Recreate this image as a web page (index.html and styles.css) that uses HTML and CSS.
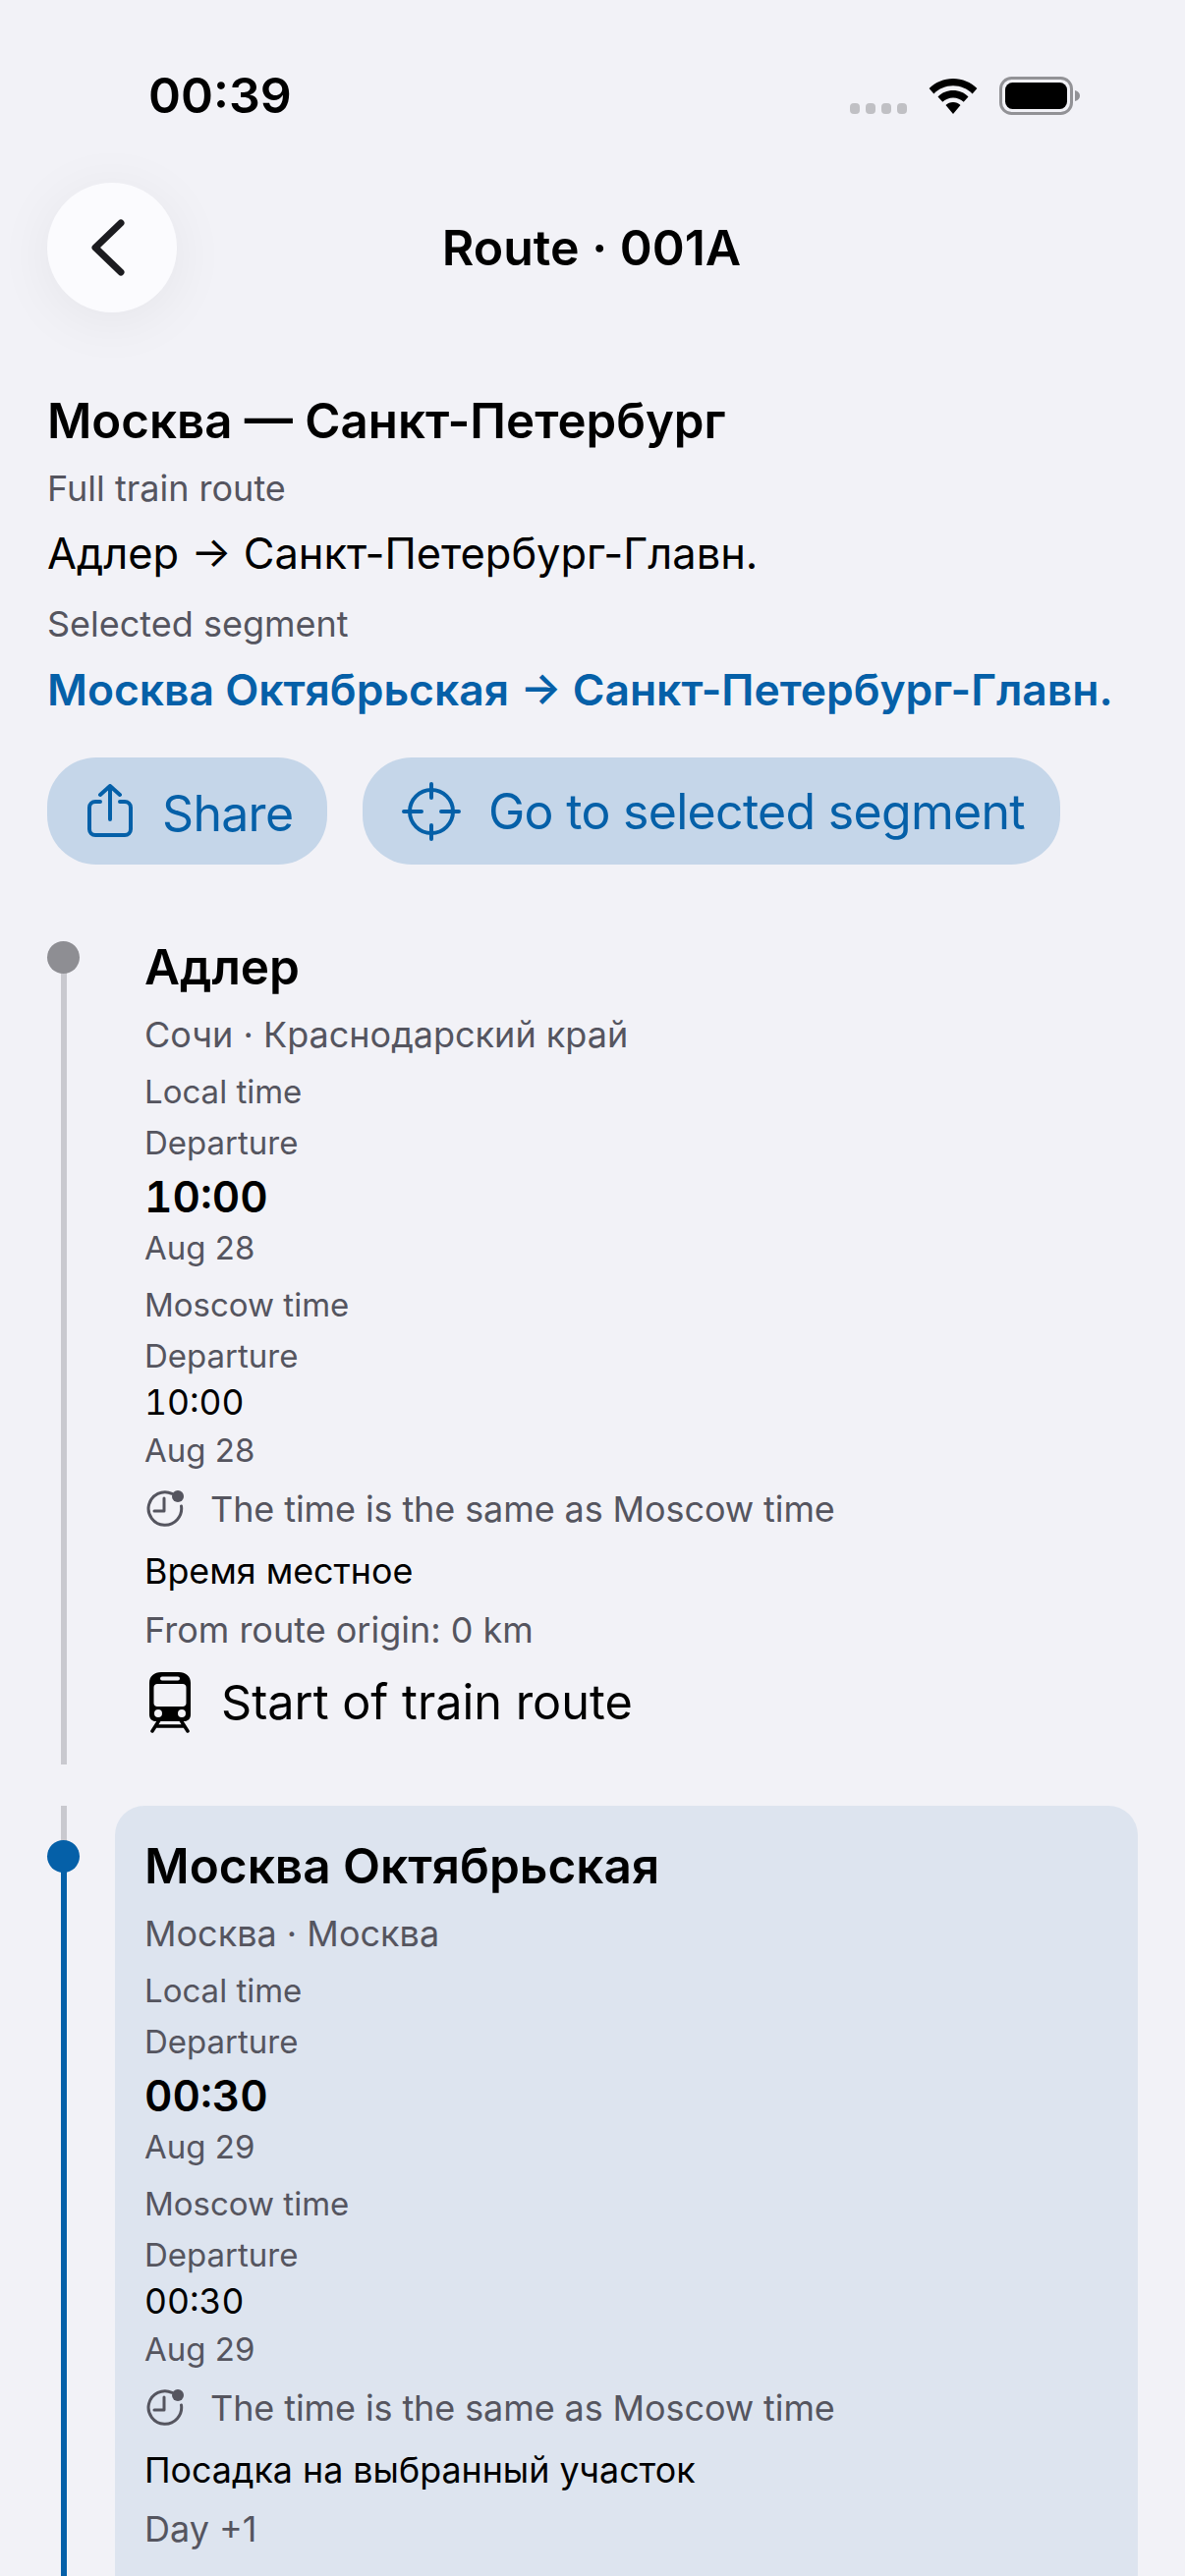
FILE: index.html
```html
<!DOCTYPE html>
<html lang="en">
<head>
<meta charset="utf-8">
<title>Route · 001A</title>
<link rel="stylesheet" href="styles.css">
</head>
<body>
<div class="page">
  <header class="status">
    <span class="clock">00:39</span>
    <div class="status-icons">
      <div class="signal"><i></i><i></i><i></i><i></i></div>
      <svg class="wifi" width="50" height="37" viewBox="0 0 50 37"><path d="M25 0C15.500 0 7 3.800 .6 10l4.800 5.400C10.500 10.400 17.400 7.300 25 7.300s14.500 3.100 19.600 8.100l4.800-5.400C43 3.800 34.500 0 25 0zM25 12c-6 0-11.500 2.400-15.500 6.400l4.800 5.400c2.800-2.700 6.600-4.400 10.700-4.400s7.900 1.700 10.700 4.400l4.800-5.400C36.500 14.400 31 12 25 12zM25 24c-2.900 0-5.500 1.100-7.500 3L25 36l7.500-9c-2-1.900-4.600-3-7.500-3z" fill="#000"/></svg>
      <svg class="battery" width="83" height="39" viewBox="0 0 83 39"><rect x="1.500" y="1.500" width="72" height="36" rx="11" fill="none" stroke="#929296" stroke-width="3"/><rect x="6" y="6" width="63" height="27" rx="7.500" fill="#000"/><path d="M77 14c3 .8 5 2.800 5 5.500s-2 4.700-5 5.500z" fill="#929296"/></svg>
    </div>
  </header>

  <nav class="nav">
    <button class="back" aria-label="Back">
      <svg width="38" height="58" viewBox="0 0 38 58"><path d="M33 4 7 29l26 25" fill="none" stroke="#1c1c20" stroke-width="7" stroke-linecap="round" stroke-linejoin="round"/></svg>
    </button>
    <h1 class="nav-title">Route · 001A</h1>
  </nav>

  <section class="summary">
    <h2 class="route-name">Москва — Санкт-Петербург</h2>
    <p class="meta label-full">Full train route</p>
    <p class="route-full">Адлер → Санкт-Петербург-Главн.</p>
    <p class="meta label-sel">Selected segment</p>
    <p class="route-sel">Москва Октябрьская → Санкт-Петербург-Главн.</p>
    <div class="actions">
      <button class="pill pill-share">
        <svg width="46" height="56" viewBox="0 0 46 56"><path d="M13 18H8a6 6 0 0 0-6 6v22a6 6 0 0 0 6 6h30a6 6 0 0 0 6-6V24a6 6 0 0 0-6-6h-5M23 36V3M13 11l10-9 10 9" fill="none" stroke="#0560a8" stroke-width="4" stroke-linecap="round" stroke-linejoin="round"/></svg>
        <span class="share-text">Share</span>
      </button>
      <button class="pill pill-go">
        <svg width="60" height="60" viewBox="0 0 60 60"><circle cx="30" cy="30" r="22" fill="none" stroke="#0560a8" stroke-width="4"/><path d="M30 2v14M30 44v14M2 30h18M40 30h18" fill="none" stroke="#0560a8" stroke-width="4" stroke-linecap="round"/></svg>
        <span>Go to selected segment</span>
      </button>
    </div>
  </section>

  <section class="timeline">
    <article class="stop stop-first">
      <div class="rail"><span class="line line-gray"></span><span class="dot dot-gray"></span></div>
      <div class="stop-body">
        <h3 class="stop-name">Адлер</h3>
        <p class="stop-region">Сочи · Краснодарский край</p>
        <p class="small s-local">Local time</p>
        <p class="small s-dep">Departure</p>
        <p class="time-big">10:00</p>
        <p class="small s-date">Aug 28</p>
        <p class="small s-msk">Moscow time</p>
        <p class="small s-dep">Departure</p>
        <p class="time-small">10:00</p>
        <p class="small s-date2">Aug 28</p>
        <div class="same">
          <svg width="42" height="38" viewBox="0 0 42 38"><path d="M28 3.300A16.800 16.800 0 1 0 37.500 16M20 8v13H10" fill="none" stroke="#55555f" stroke-width="3" stroke-linecap="round" stroke-linejoin="round"/><circle cx="34" cy="6" r="6" fill="#55555f"/></svg>
          <span>The time is the same as Moscow time</span>
        </div>
        <p class="note">Время местное</p>
        <p class="origin">From route origin: 0 km</p>
        <div class="endpoint">
          <svg width="42" height="62" viewBox="2 0 42 62"><path fill-rule="evenodd" d="M14 0h18c7 0 12 4 12 11v32c0 4-2 6-5 7H7c-3-1-5-3-5-7V11C2 4 7 0 14 0zM15 4.500a1.500 1.500 0 0 0 0 4h16a1.500 1.500 0 0 0 0-4zM10 12c-2 0-3.500 1.500-3.500 3.500v16c0 2 1.500 3.500 3.500 3.500h26c2 0 3.500-1.500 3.500-3.500v-16c0-2-1.500-3.500-3.500-3.500zM11 38a4 4 0 1 0 0 8 4 4 0 0 0 0-8zM35 38a4 4 0 1 0 0 8 4 4 0 0 0 0-8z" fill="#000"/><path d="M12 49 5 60M34 49l7 11M9 55h28" fill="none" stroke="#000" stroke-width="3.500" stroke-linecap="round"/></svg>
          <span>Start of train route</span>
        </div>
      </div>
    </article>

    <article class="stop stop-selected">
      <div class="rail"><span class="line line-gray line-top"></span><span class="line line-blue"></span><span class="dot dot-blue"></span></div>
      <div class="stop-body card">
        <h3 class="stop-name">Москва Октябрьская</h3>
        <p class="stop-region">Москва · Москва</p>
        <p class="small s-local">Local time</p>
        <p class="small s-dep">Departure</p>
        <p class="time-big">00:30</p>
        <p class="small s-date">Aug 29</p>
        <p class="small s-msk">Moscow time</p>
        <p class="small s-dep">Departure</p>
        <p class="time-small">00:30</p>
        <p class="small s-date2">Aug 29</p>
        <div class="same">
          <svg width="42" height="38" viewBox="0 0 42 38"><path d="M28 3.300A16.800 16.800 0 1 0 37.500 16M20 8v13H10" fill="none" stroke="#55555f" stroke-width="3" stroke-linecap="round" stroke-linejoin="round"/><circle cx="34" cy="6" r="6" fill="#55555f"/></svg>
          <span>The time is the same as Moscow time</span>
        </div>
        <p class="note">Посадка на выбранный участок</p>
        <p class="origin">Day +1</p>
        <p class="origin origin-last">From route origin: 1 389 km</p>
      </div>
    </article>
  </section>
</div>
</body>
</html>
```

FILE: styles.css
```css
* { box-sizing: border-box; margin: 0; padding: 0; }
html, body { width: 1206px; height: 2622px; overflow: hidden; background: #f2f2f7; }
body { font-family: Inter, "Noto Sans", sans-serif; color: #000; }
.page { width: 1206px; height: 2622px; overflow: hidden; }

.status { height: 186px; padding: 72px 106px 0 151px; display: flex; justify-content: space-between; align-items: flex-start; }
.clock { font-size: 50px; font-weight: 600; line-height: 50px; }
.status-icons { display: flex; align-items: flex-end; gap: 22px; padding-top: 6px; }
.signal { display: flex; gap: 6px; padding-bottom: 1px; }
.signal i { width: 10px; height: 11px; border-radius: 4px; background: #c0c0c4; }

.nav { height: 132px; position: relative; display: flex; align-items: center; justify-content: center; padding-right: 2px; }
.back { position: absolute; left: 48px; top: 0; width: 132px; height: 132px; border: 0; border-radius: 50%; background: #fbfbfe; display: flex; align-items: center; justify-content: center; padding-right: 10px; box-shadow: 0 8px 60px rgba(0,0,0,.06); }
.nav-title { font-size: 50px; font-weight: 600; line-height: 62px; }

.summary { padding: 80px 48px 0; }
.route-name { font-size: 49.200px; font-weight: 600; line-height: 60px; }
.meta { font-size: 36px; line-height: 42px; color: #55555f; }
.label-full { margin-top: 18px; }
.route-full { font-size: 43.400px; line-height: 54px; margin-top: 18px; }
.label-sel { margin-top: 24px; }
.route-sel { font-size: 44.400px; font-weight: 600; line-height: 54px; margin-top: 19px; color: #0560a8; }
.actions { display: flex; gap: 36px; margin-top: 42px; }
.pill { height: 109px; border: 0; border-radius: 50px; background: #c5d6e9; color: #0560a8; font-family: inherit; font-size: 50px; letter-spacing: -.7px; display: flex; align-items: center; }
.pill-share { width: 285px; padding-left: 41px; gap: 30px; }
.pill-go { width: 710px; padding-left: 40px; gap: 28px; }
.share-text { padding-top: 4px; }

.timeline { padding: 0 48px 0 0; margin-top: 74px; display: flex; flex-direction: column; gap: 42px; }
.stop { display: flex; }
.rail { width: 117px; flex: none; position: relative; }
.line { position: absolute; left: 62px; width: 6px; }
.line-gray { background: #c9c9cf; }
.stop-first .line-gray { top: 20px; bottom: 0; }
.line-top { top: 0; height: 52px; }
.line-blue { top: 52px; bottom: 0; background: #0560a8; }
.dot { position: absolute; left: 48px; width: 33px; height: 33px; border-radius: 50%; }
.dot-gray { top: 4px; background: #8e8e93; }
.dot-blue { top: 35px; background: #0560a8; }

.stop-first { height: 842px; }
.stop-selected { height: 1000px; }
.stop-first .stop-body { padding: 0 30px; }
.stop-body { flex: 1; }
.card { background: #dde4ef; border-radius: 30px; padding: 31px 30px 0; }
.stop-name { font-size: 49.500px; font-weight: 600; line-height: 60px; }
.stop-region { font-size: 36px; line-height: 44px; color: #55555f; margin-top: 17px; }
.small { font-size: 33px; line-height: 40px; color: #55555f; }
.s-local { margin-top: 16px; }
.s-dep { margin-top: 12px; }
.time-big { font-size: 44px; font-weight: 600; line-height: 56px; margin-top: 7px; font-variant-numeric: tabular-nums; }
.s-date { margin-top: 4px; }
.s-msk { margin-top: 18px; }
.time-small { font-size: 35.500px; line-height: 44px; margin-top: 6px; font-variant-numeric: tabular-nums; }
.s-date2 { margin-top: 6px; }
.same { display: flex; align-items: center; gap: 25px; font-size: 36px; letter-spacing: -.1px; line-height: 44px; color: #55555f; margin-top: 18px; }
.note { font-size: 35.800px; line-height: 44px; margin-top: 19px; }
.origin { font-size: 36px; line-height: 44px; color: #55555f; margin-top: 16px; }
.origin-last { margin-top: 22px; }
.endpoint { display: flex; align-items: center; gap: 31px; font-size: 48.600px; line-height: 62px; margin-top: 21px; padding-left: 5px; }
```
